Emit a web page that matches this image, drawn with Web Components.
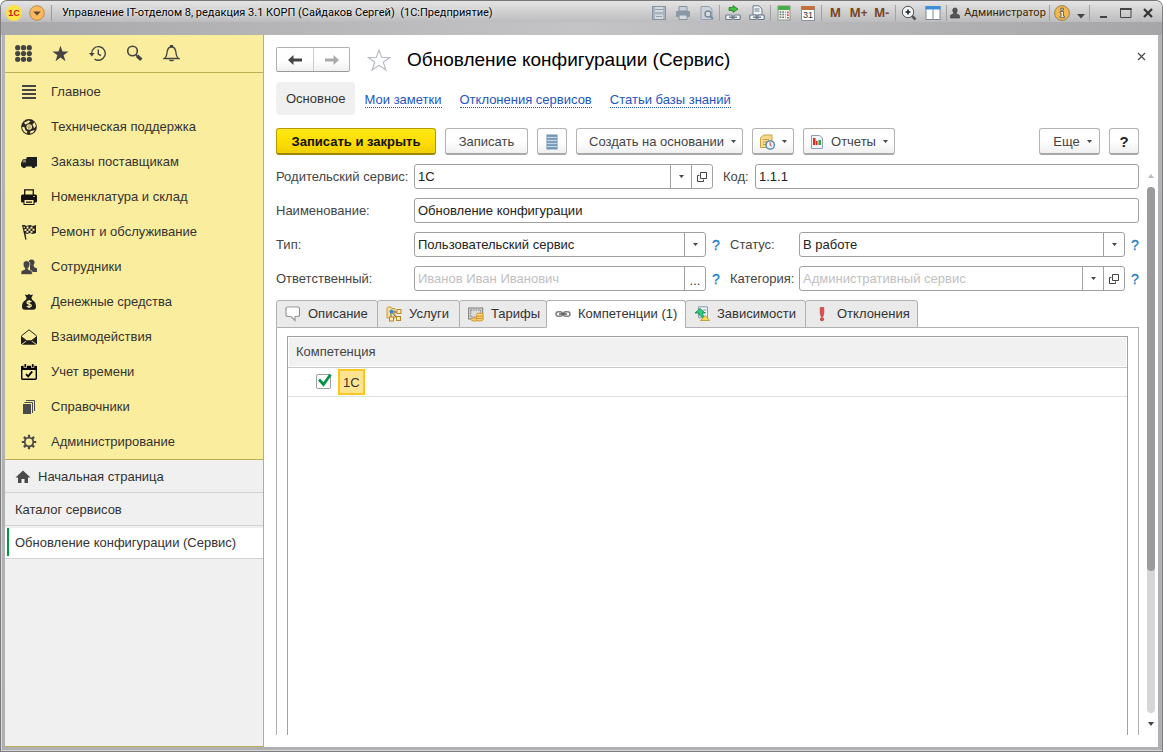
<!DOCTYPE html>
<html lang="ru">
<head>
<meta charset="utf-8">
<title>Управление IT-отделом 8</title>
<style>
  html, body { margin: 0; height: 100%; }
  body { font: 13px/16px "Liberation Sans", Arial, sans-serif; color: #333; background: #fff; }
</style>
</head>
<body>
<app-window>
  <title-bar slot="title" caption="Управление IT-отделом 8, редакция 3.1 КОРП (Сайдаков Сергей)  (1С:Предприятие)" user="Администратор"></title-bar>
  <side-bar slot="side">
    <menu-item icon="lines">Главное</menu-item>
    <menu-item icon="ball">Техническая поддержка</menu-item>
    <menu-item icon="truck">Заказы поставщикам</menu-item>
    <menu-item icon="printer">Номенклатура и склад</menu-item>
    <menu-item icon="flag">Ремонт и обслуживание</menu-item>
    <menu-item icon="people">Сотрудники</menu-item>
    <menu-item icon="money">Денежные средства</menu-item>
    <menu-item icon="mail">Взаимодействия</menu-item>
    <menu-item icon="calendar">Учет времени</menu-item>
    <menu-item icon="books">Справочники</menu-item>
    <menu-item icon="gear">Администрирование</menu-item>
    <open-page slot="pages" icon="home">Начальная страница</open-page>
    <open-page slot="pages">Каталог сервисов</open-page>
    <open-page slot="pages" active>Обновление конфигурации (Сервис)</open-page>
  </side-bar>
  <service-form caption="Обновление конфигурации (Сервис)">
    <nav-links slot="nav" current="Основное" links="Мои заметки|Отклонения сервисов|Статьи базы знаний"></nav-links>
    <cmd-button slot="commands" primary style="--w:160px">Записать и закрыть</cmd-button>
    <cmd-button slot="commands" style="--w:83px">Записать</cmd-button>
    <cmd-button slot="commands" icon="journal" label="Журнал" style="--w:30px"></cmd-button>
    <cmd-button slot="commands" menu style="--w:167px">Создать на основании</cmd-button>
    <cmd-button slot="commands" menu icon="remind" label="Напоминание" style="--w:42px"></cmd-button>
    <cmd-button slot="commands" menu icon="report" style="--w:92px">Отчеты</cmd-button>
    <cmd-button slot="more" menu style="--w:61px">Еще</cmd-button>
    <cmd-button slot="more" help style="--w:30px">?</cmd-button>

    <form-row slot="fields" cols="437px 1fr" gap="10px">
      <form-field label="Родительский сервис:" value="1С" buttons="drop open" style="--label:138px"></form-field>
      <form-field label="Код:" value="1.1.1" style="--label:32px"></form-field>
    </form-row>
    <form-row slot="fields" cols="1fr">
      <form-field label="Наименование:" value="Обновление конфигурации" style="--label:138px"></form-field>
    </form-row>
    <form-row slot="fields" cols="444px 1fr" gap="10px">
      <form-field label="Тип:" kind="select" value="Пользовательский сервис" hint style="--label:138px"></form-field>
      <form-field label="Статус:" kind="select" value="В работе" hint style="--label:69px"></form-field>
    </form-row>
    <form-row slot="fields" cols="444px 1fr" gap="10px">
      <form-field label="Ответственный:" placeholder="Иванов Иван Иванович" buttons="dots" hint style="--label:138px"></form-field>
      <form-field label="Категория:" placeholder="Административный сервис" buttons="drop open" hint style="--label:69px"></form-field>
    </form-row>

    <tab-panel slot="tabs">
      <tab-head slot="heads" icon="bubble" style="--w:101px">Описание</tab-head>
      <tab-head slot="heads" icon="services" style="--w:82px">Услуги</tab-head>
      <tab-head slot="heads" icon="tariff" style="--w:87px">Тарифы</tab-head>
      <tab-head slot="heads" icon="chain" active style="--w:139px">Компетенции (1)</tab-head>
      <tab-head slot="heads" icon="depend" style="--w:120px">Зависимости</tab-head>
      <tab-head slot="heads" icon="alert" style="--w:112px">Отклонения</tab-head>
      <check-list column="Компетенция" item="1С"></check-list>
    </tab-panel>
    <scroll-rail slot="rail"></scroll-rail>
  </service-form>
</app-window>

<script>
const ICONS = {
  grid: [17, 17, '<g fill="#444"><circle cx="2.7" cy="2.7" r="2.6"/><circle cx="8.5" cy="2.7" r="2.6"/><circle cx="14.3" cy="2.7" r="2.6"/><circle cx="2.7" cy="8.5" r="2.6"/><circle cx="8.5" cy="8.5" r="2.6"/><circle cx="14.3" cy="8.5" r="2.6"/><circle cx="2.7" cy="14.3" r="2.6"/><circle cx="8.5" cy="14.3" r="2.6"/><circle cx="14.3" cy="14.3" r="2.6"/></g>'],
  star: [17, 17, '<path fill="#444" d="M8.5.8l2 5.800h6l-4.900 3.600 1.900 6-5-3.700-5 3.700 1.900-6L.5 6.600h6z"/>'],
  history: [17, 17, '<g fill="none" stroke="#444" stroke-width="1.400"><path d="M2.600 8.500a6.800 6.800 0 1 1 3 5.600"/><path d="M9.300 4.500V9l2.700 1.700"/></g><path fill="#444" d="M0 8h5.600l-2.800 3.400z"/>'],
  search: [17, 17, '<circle cx="6.500" cy="6" r="4.800" fill="none" stroke="#444" stroke-width="1.600"/><path d="M10 9.500l1.500 1.500" stroke="#444" stroke-width="1.500"/><path d="M11 10.800l4.300 4" stroke="#444" stroke-width="3.400"/>'],
  bell: [17, 17, '<path fill="none" stroke="#444" stroke-width="1.300" d="M1.200 13.500c2.400-1.400 2.600-3.300 2.900-6.200C4.400 3.800 5.600 2 8.500 2s4.100 1.800 4.400 5.300c.3 2.900.5 4.800 2.900 6.200zM7.600 1.700V.6h1.800v1.100"/><path fill="#444" d="M5.800 14.800h5.400c-.8 2-4.600 2-5.400 0z"/>'],
  lines: [16, 16, '<path fill="#444" d="M1 1h14v2H1zM1 5h14v2H1zM1 9h14v2H1zM1 13h14v2H1z"/>'],
  ball: [16, 16, '<circle cx="8" cy="8" r="7.900" fill="#2a2622"/><g fill="#faec9f"><path d="M3 3.800L7.500 1.500 9.500 2.300 7.300 4.200 4.300 5.500zM11.500 5.200l2.200-2 1.300 4-2 2zM1 8.200l2.200-.4 1.300 3.400 2 1.600-1 1.600C3 13.200 1.500 11 1 8.200zM9 12.500l3.500-1.300 1.200.6c-1.200 1.700-2.700 2.500-4.300 2.900z"/></g><circle cx="8.200" cy="8" r="2.800" fill="#faec9f"/><path d="M7 6.500l2.200-.2 1 1.700-1.100 1.800H7.100L6.200 8z" fill="#b8ad78"/>'],
  truck: [16, 16, '<path fill="#1e1e1e" d="M6 3h10v9.500h-1.600a2 2 0 0 1-3.900 0H5a2 2 0 0 1-3.900 0H0V9l2-3.800h3z"/><path fill="#8d8455" d="M2.500 6H5v2.500H1.300z"/><circle cx="3.100" cy="12.300" r="1.400" fill="#1e1e1e"/><circle cx="12.500" cy="12.300" r="1.400" fill="#1e1e1e"/>'],
  printer: [16, 16, '<path d="M3.700 7V.8h8.600V7" fill="none" stroke="#111" stroke-width="1.300"/><rect y="5.500" width="16" height="8" rx="1.500" fill="#111"/><rect x="3" y="10.500" width="10" height="5" fill="#faec9f" stroke="#111"/><path d="M5 12.500h6v1.300H5z" fill="#111"/><path d="M12 7h2v1h-2z" fill="#b0a565"/>'],
  flag: [16, 16, '<path fill="#222" d="M1 1h3l1 1 4-1 3 1 3-1v8l-3 1-3-1-3 1-1.500-.8L5.500 15.500 4.300 15.800z"/><g fill="#faec9f"><path d="M5.500 2.500l2 .1v1.800l-2 .3zM9.500 2.700l2-.1v2l-2 .2zM7.500 4.700h2v2h-2zM3.500 5h2v2h-2zM11.500 4.700h2v2h-2zM5.500 7l2-.2v1.800l-2 .4zM9.500 7h2v1.800h-2zM2.500 2.500h1l.5 1-1 1z"/></g>'],
  people: [16, 16, '<g fill="#444"><circle cx="10.500" cy="3.400" r="3"/><path d="M9 6h3.500l.5 2 3 1.500V13H9z"/><path d="M5.500 1.800c2.500 0 3.500 1.700 3.300 4-.1 1.600-.9 2.900-1.700 3.400v1.100l3 1.200c1 .4 1.200 1.300 1.200 4.100H-.1c0-2.800.2-3.700 1.200-4.100l2.800-1.200V9.200c-.9-.5-1.600-1.800-1.700-3.400-.2-2.300.8-4 3.300-4z" stroke="#faec9f" stroke-width=".7"/></g>'],
  money: [16, 16, '<path fill="#1e1e1e" d="M3.800.5l2.300.6L8 0l1.800 1.100 2.300-.6-2 3.800h.8v1.200c3 1.800 4.100 4.200 4.100 7 0 2.200-1 3.300-3 3.300H4c-2 0-3-1.100-3-3.300 0-2.800 1.200-5.200 4.200-7V4.300h.6z"/><path fill="none" stroke="#faec9f" stroke-width="1.300" d="M10.300 8c-.8-1-4.300-1.200-4.300.7 0 2 4.300.8 4.300 2.800 0 1.900-3.600 1.800-4.600.6M8.100 6v8"/>'],
  mail: [16, 16, '<path fill="none" stroke="#222" d="M.5 6.800L8 .8l7.500 6v1L10 12H6L.5 7.800z"/><path fill="#1e1e1e" d="M0 7.500l5.300 4L0 15.500zM16 7.500l-5.300 4 5.300 4zM6.300 11.500h3.400l5.300 4.300H1z"/>'],
  calendar: [16, 16, '<rect x=".7" y="2.500" width="14.600" height="12.800" rx="1" fill="none" stroke="#000" stroke-width="1.400"/><path d="M0 2h16v4H0z"/><g fill="#000" stroke="#faec9f" stroke-width=".8"><rect x="3" y="-.3" width="2.600" height="3.600"/><rect x="10.400" y="-.3" width="2.600" height="3.600"/></g><path fill="none" stroke="#000" stroke-width="1.800" d="M5 10.200l2.200 2.200 4-5"/>'],
  books: [16, 16, '<path fill="#4a4a4a" d="M2 5h8v10H2z"/><path fill="none" stroke="#4a4a4a" d="M3.500 3.500h8V14M5 1.500h8.500V12"/>'],
  gear: [16, 16, '<g stroke="#4a4a4a" fill="none"><circle cx="8" cy="8" r="4.300" stroke-width="1.800"/><path stroke-width="2.200" d="M8 .8v2.800M8 12.400v2.800M.8 8h2.800M12.400 8h2.800M2.900 2.900l2 2M11.100 11.100l2 2M13.100 2.900l-2 2M4.900 11.100l-2 2"/></g>'],
  home: [16, 16, '<path fill="#4a4a4a" d="M8 1.500l7.500 7H13V14H9.500v-4h-3v4H3V8.500H.5z"/>'],
  back: [16, 12, '<path fill="#444" d="M1 6l5.500-5v3.600H15v2.800H6.500V11z"/>'],
  fwd: [16, 12, '<path fill="#aaa" d="M15 6L9.500 1v3.600H1v2.800h8.500V11z"/>'],
  fav: [24, 24, '<path fill="#fff" stroke="#b9bdc4" stroke-width="1.200" d="M12 2l2.700 7.500h8L16.300 14.200l2.500 7.800L12 17.300 5.200 22l2.500-7.800L1.300 9.500h8z"/>'],
  close: [9, 9, '<path stroke="#444" stroke-width="1.200" d="M1 1l7 7M8 1L1 8"/>'],
  arrow: [5, 3, '<path fill="#444" d="M0 0h5L2.500 3z"/>'],
  open: [10, 10, '<path fill="none" stroke="#444" stroke-width="1" d="M3.500.5h6v6h-6zM2.500 3.500h-2v6h6v-2"/>'],
  journal: [12, 16, '<rect x="1" y="1" width="10" height="14" fill="#7d9fbd" stroke="#6d90b0"/><path stroke="#c3d6e6" d="M1 3.500h10M1 6.500h10M1 9.500h10M1 12.500h10"/>'],
  remind: [16, 16, '<path fill="#f6d98a" stroke="#c9a24a" d="M4.500 1H13v12.500H1.500V4z"/><path stroke="#c9a24a" d="M4 5.500h6M4 8h4M4 10.500h3"/><circle cx="11.200" cy="11" r="4.200" fill="#e9f1fa" stroke="#4a7fb5" stroke-width="1.300"/><path fill="none" stroke="#c0392b" d="M11.200 8.500V11l1.500 1"/>'],
  report: [14, 16, '<path fill="#f3f7fa" stroke="#8aa0b2" d="M1.500 1.500h8L12.500 4v10.500h-11z"/><path fill="#e0281e" d="M3 4h2.500v7H3zM6 7h1.600v4H6z"/><path fill="#3a9b4b" d="M8.500 6H11v5H8.500z"/>'],
  bubble: [16, 16, '<path fill="#fff" stroke="#999" stroke-width="1.200" d="M3 1h9.500q2 0 2 2v5.500q0 2-2 2H10v4L6 10.500H3q-2 0-2-2V3q0-2 2-2z"/>'],
  services: [16, 16, '<path fill="#f9dd95" stroke="#c79a3c" d="M1 2.500l1-1.500h3l1 1.500h3V12H1z"/><path stroke="#5a6a7a" fill="none" d="M6 6h5M6 6.500l5 5.500M5 7v5"/><g fill="#ffeab0" stroke="#b5852a"><rect x="11" y="3.500" width="4" height="4"/><rect x="10.500" y="10.500" width="4" height="4"/><rect x="3.500" y="11" width="4" height="4"/></g><circle cx="5.500" cy="5.500" r="2" fill="#3b86d0"/>'],
  tariff: [16, 16, '<rect x=".7" y="2" width="14" height="11" fill="#dcdcdc" stroke="#777"/><rect x="2.700" y="4" width="10" height="7" fill="none" stroke="#777" stroke-dasharray="1.500 1"/><g fill="#ffd070" stroke="#c98a20" stroke-width=".8"><ellipse cx="6.500" cy="13.500" rx="3.500" ry="1.600"/><ellipse cx="11.800" cy="13.300" rx="3.600" ry="1.700"/><ellipse cx="11.800" cy="11" rx="3.600" ry="1.700"/><ellipse cx="11.800" cy="8.700" rx="3.600" ry="1.700"/></g>'],
  chain: [16, 16, '<g fill="none" stroke="#808080" stroke-width="1.500"><rect x="1" y="5.700" width="6.500" height="4.600" rx="2.300"/><rect x="8.500" y="5.700" width="6.500" height="4.600" rx="2.300"/></g><path stroke="#555" stroke-width="1.400" d="M4 8h8"/>'],
  depend: [16, 16, '<path fill="#edf2f7" stroke="#8a9db0" d="M4.500.8h9v11h-9z"/><path stroke="#8a9db0" d="M9 4h3M9 6.500h3"/><path fill="#2fd07c" stroke="#178a50" stroke-width=".9" d="M6 2.500l5 4.500H8.500c.2 2 1 3.200 3 4.200-4 .3-6.300-1-6.500-4.200H1z"/><path fill="#ffdc4a" stroke="#b8922a" stroke-width=".8" d="M11.200 9.500l4.300 5H6.500z"/>'],
  alert: [16, 16, '<path fill="#e0504c" stroke="#a83632" stroke-width=".6" d="M6.200 1.500h3.600V7L9 10.500H7L6.200 7z"/><circle cx="8" cy="13.200" r="1.700" fill="#e0504c" stroke="#a83632" stroke-width=".6"/>'],
  save: [16, 16, '<rect x="1.500" y="1.500" width="13" height="13" fill="#a9b4bf" stroke="#8594a3"/><path fill="#d5dae0" d="M4 2h8v5H4zM4 9.500h8V14H4z"/><path stroke="#93a1ae" d="M4 4.500h8M5 11.500h6"/>'],
  print: [16, 16, '<path fill="#c9cfd6" stroke="#8594a3" d="M4 1.500h8V6H4z"/><rect x="1" y="6" width="14" height="6" rx="1" fill="#8a98a6"/><path fill="#d7dbe0" stroke="#8594a3" d="M4 10h8v4.500H4z"/>'],
  preview: [16, 16, '<path fill="#ccd2d9" stroke="#93a1ae" d="M2 1.500h8L13 4v10.500H2z"/><circle cx="9" cy="9" r="3" fill="#d9dee4" stroke="#7c8b9a" stroke-width="1.500"/><path stroke="#7c8b9a" stroke-width="2" d="M11.200 11.200L14 14"/>'],
  link: [16, 16, '<path fill="#3fc23f" stroke="#1d7f1d" stroke-width=".8" d="M4 2.500h4V.5l5 3.500-5 3.500v-2H4z"/><g fill="#f2f5f8" stroke="#6b7a8a" stroke-width="1.200"><rect x=".8" y="10" width="6.400" height="4.500" rx="1"/><rect x="8.800" y="10" width="6.400" height="4.500" rx="1"/></g><path stroke="#6b7a8a" stroke-width="1.400" d="M4 12.200h8"/>'],
  linkdoc: [16, 16, '<path fill="#f2f5f8" stroke="#6b7a8a" d="M4 .8h6L13 4v6H4zM5.500 4h5M5.500 6h5"/><g fill="#f2f5f8" stroke="#6b7a8a" stroke-width="1.200"><rect x=".8" y="10" width="6.400" height="4.500" rx="1"/><rect x="8.800" y="10" width="6.400" height="4.500" rx="1"/></g><path stroke="#6b7a8a" stroke-width="1.400" d="M4 12.200h8"/>'],
  calc: [14, 16, '<rect x="1" y="1" width="12" height="14" fill="#eef1ee" stroke="#8a968a"/><path fill="#45b04b" d="M1 1h12v4H1z"/><path stroke="#6c7a6c" stroke-width="1.500" stroke-dasharray="1.700 1" d="M2.600 7h6M2.600 9.500h6M2.600 12.300h6"/><path stroke="#d44" stroke-width="1.600" stroke-dasharray="1.700 1" d="M10.800 6.500v7"/>'],
  zoomin: [16, 16, '<circle cx="7" cy="7" r="5.700" fill="#f4f7fa" stroke="#555"/><path stroke="#222" stroke-width="1.600" d="M4.500 7h5M7 4.500v5"/><path stroke="#555" stroke-width="2.600" d="M11 11l3.500 3.500"/>'],
  panes: [16, 16, '<rect x="1" y="1.500" width="14" height="13" fill="#fff" stroke="#7d8894"/><path fill="#3f8fd8" d="M.5 1h15v3.500H.5z"/><path stroke="#7d8894" d="M8 4.500v10"/>'],
  user: [10, 12, '<path fill="#555" stroke="#333" stroke-width=".6" d="M5 1c1.700 0 2.400 1.100 2.200 2.700-.1 1.100-.5 1.800-1 2.300v.9l2.500.9c.7.300.8.900.8 3.200H.5c0-2.300.1-2.900.8-3.200l2.500-.9V6c-.5-.5-.9-1.200-1-2.300C2.600 2.100 3.300 1 5 1z"/>'],
  info: [16, 16, '<circle cx="8" cy="8" r="7.400" fill="#f4b94e" stroke="#9a8050"/><path fill="#e9e2d0" stroke="#555" stroke-width=".8" d="M6.800 3.200h2.600v2H6.800zM6 6.500h3.500v4.700h1v1.500H6v-1.500h1V8H6z"/>'],
  tri: [8, 6, '<path fill="#444" d="M0 1h8L4 5.500z"/>'],
  wmin: [12, 12, '<path fill="#444" d="M2 9h7v2H2z"/>'],
  wmax: [12, 12, '<path fill="none" stroke="#444" d="M.5 1.500h10.500v9H.5z"/><path fill="#444" d="M0 1h11.500v2H0z"/>'],
  wclose: [12, 12, '<path stroke="#333" stroke-width="2.200" d="M2 2l8 8M10 2l-8 8"/>'],
  round: [16, 16, '<circle cx="8" cy="8" r="7.300" fill="#f9b95c" stroke="#b98a4e"/><path fill="#5a4a35" d="M4.200 6.500h7.600L8 10.500z"/>'],
  tick: [15, 15, '<path fill="none" stroke="#009646" stroke-width="2.800" d="M3 5.500l4.500 5L14.500.5"/>'],
  up: [8, 5, '<path fill="#bbb" d="M1 5h6L4 1z"/>'],
  down: [8, 5, '<path fill="#444" d="M1 0h6L4 4z"/>']
};
const svg = n => { const [w, h, b] = ICONS[n]; return `<svg width="${w}" height="${h}" viewBox="0 0 ${w} ${h}" aria-hidden="true">${b}</svg>`; };

class Base extends HTMLElement {
  connectedCallback() {
    if (this.shadowRoot) return;
    this.attachShadow({ mode: 'open' }).innerHTML =
      `<style>*{box-sizing:border-box}svg{display:block;flex:none}button,input,select{font:inherit;color:inherit;margin:0}button{padding:0;border:0;background:none}${this.css()}</style>${this.html()}`;
  }
  at(n) { return this.getAttribute(n) || ''; }
}

customElements.define('app-window', class extends Base {
  css() { return `
    :host{display:flex;flex-direction:column;box-sizing:border-box;min-height:100vh;border:1px solid #7d7d7f;border-top-color:#77777a;border-radius:7px 7px 0 0;
      background:linear-gradient(#b4b4b6,#b0b0b2);padding:0 4px 4px;box-shadow:inset 1px -1px #d6d6d6}
    .body{flex:1;display:flex;min-height:0;background:#fff}
    ::slotted(side-bar){flex:none;width:259px}
    ::slotted(service-form){flex:1;min-width:0}`; }
  html() { return `<slot name="title"></slot><div class="body"><slot name="side"></slot><slot></slot></div>`; }
});

customElements.define('title-bar', class extends Base {
  css() { return `
    :host{display:block;margin:0 -4px;height:34px;border-radius:6px 6px 0 0;font:11px/22px Roboto,sans-serif;color:#222;
      background:linear-gradient(#e4e4e4,#bcbcbe 21px,transparent 21px),linear-gradient(90deg,#a8a8ab,#c4c4c6 50%,#a6a6a9)}
    header{display:flex;height:24px;align-items:center;padding-left:5px}
    .left{display:flex;gap:7px;align-items:center;padding-right:6px;height:16px;border-right:1px solid #999}
    .logo{width:16px;height:16px;border-radius:50%;background:radial-gradient(#ffee58,#ffd83a);font:bold 9px/16px "Liberation Sans",sans-serif;color:#d8141c;text-align:center}
    .cap{flex:1;min-width:0;padding-left:10px;white-space:pre;overflow:hidden;color:#000;text-shadow:0 0 3px #fff}
    .g{display:flex;align-items:center;justify-content:center;height:16px;border-left:1px solid #a2a2a4}
    .g.first{border:0}
    .g button{width:24px;height:22px;display:flex;align-items:center;justify-content:center}
    .m button{width:23px;font:bold 12px/22px "Open Sans",sans-serif;color:#7c4321}
    .g .user{width:auto;gap:4px;color:#3c2800}
    .w button{width:22px}
    .cal{width:14px;height:15px;border:1px solid #8a8f99;border-top:4px solid #c2703c;background:#fff;font:9px/10px "Liberation Sans",sans-serif;color:#333}`; }
  html() {
    const b = (n, l) => `<button title="${l}" aria-label="${l}">${svg(n)}</button>`;
    return `<header><div class="left"><span class="logo">1С</span><button aria-label="Главное меню">${svg('round')}</button></div>
    <div class="cap">${this.at('caption')}</div>
    <div class="g first" style="width:72px">${b('save', 'Сохранить')}${b('print', 'Печать')}${b('preview', 'Просмотр')}</div>
    <div class="g" style="width:51px">${b('link', 'Перейти по ссылке')}${b('linkdoc', 'Получить ссылку')}</div>
    <div class="g" style="width:51px">${b('calc', 'Калькулятор')}<button aria-label="Календарь"><span class="cal">31</span></button></div>
    <div class="g m" style="width:74px"><button>M</button><button>M+</button><button>M-</button></div>
    <div class="g" style="width:51px">${b('zoomin', 'Масштаб')}${b('panes', 'Панели')}</div>
    <div class="g" style="width:103px"><button class="user">${svg('user')}${this.at('user')}</button></div>
    <div class="g w" style="width:40px">${b('info', 'Справка')}<button aria-label="Ещё" style="width:16px;padding-top:5px">${svg('tri')}</button></div>
    <div class="g w" style="width:73px">${b('wmin', 'Свернуть')}${b('wmax', 'Развернуть')}${b('wclose', 'Закрыть')}</div></header>`;
  }
});

customElements.define('side-bar', class extends Base {
  css() { return `
    :host{display:flex;flex-direction:column;box-sizing:border-box;background:#f0f0f0;border-right:1px solid #bfb25f;border-bottom:1px solid #bfae55}
    .tools{display:flex;height:38px;background:#fbed9e;border-bottom:1px solid #bfae55}
    .tools button{width:37px;display:flex;align-items:center;justify-content:center}
    nav.main{background:#fbed9e;padding:1px 0 0;border-bottom:1px solid #bfae55}`; }
  html() { return `<div class="tools">${[['grid', 'Меню'], ['star', 'Избранное'], ['history', 'История'], ['search', 'Поиск'], ['bell', 'Оповещения']].map(([n, l]) => `<button aria-label="${l}">${svg(n)}</button>`).join('')}</div>
    <nav class="main"><slot></slot></nav><nav><slot name="pages"></slot></nav>`; }
});

customElements.define('menu-item', class extends Base {
  css() { return `:host{display:block}a{display:flex;align-items:center;gap:14px;height:35px;padding-left:16px;color:#333;text-decoration:none;white-space:nowrap}`; }
  html() { return `<a href="#">${svg(this.at('icon'))}<slot></slot></a>`; }
});

customElements.define('open-page', class extends Base {
  css() { return `:host{display:block;border-bottom:1px solid #d2d2d2}:host([active]){background:#fff}
    a{display:flex;align-items:center;gap:7px;height:32px;padding:2px 0 0 10px;color:#333;text-decoration:none;white-space:nowrap}
    :host([active]) a{padding:2px 0 0 6px;height:28px;margin:2px;border-left:2px solid #009646}`; }
  html() { return `<a href="#">${this.at('icon') ? svg(this.at('icon')) : ''}<slot></slot></a>`; }
});

customElements.define('service-form', class extends Base {
  css() { return `
    :host{display:flex;flex-direction:column;box-sizing:border-box;padding:12px 3px 12px 12px}
    .head{display:flex;align-items:center;height:25px}
    .hist{display:flex;height:25px;border:1px solid #b0b0b0;border-bottom-color:#999;border-radius:2px;background:linear-gradient(#fff 50%,#f0f0f0)}
    .hist button{width:36px;display:flex;align-items:center;justify-content:center}
    .hist button+button{border-left:1px solid #ccc}
    .fav{margin:0 16px 0 17px}
    h1{flex:1;margin:0;font:19px/24px "Liberation Sans",Arial,sans-serif;color:#000;white-space:nowrap}
    .x{padding:4px 9px;margin-bottom:6px}
    .bar{display:flex;gap:9px;margin:13px 16px 9px 0}
    .sp{flex:1}
    .work{flex:1;display:flex;min-height:0}
    .form{flex:1;min-width:0;display:flex;flex-direction:column;gap:9px}
    ::slotted(tab-panel){flex:1}
    ::slotted(scroll-rail){flex:none;width:16px}`; }
  html() { return `<div class="head"><div class="hist"><button aria-label="Назад">${svg('back')}</button><button aria-label="Вперед">${svg('fwd')}</button></div>
    <button class="fav" aria-label="В избранное">${svg('fav')}</button><h1>${this.at('caption')}</h1><button class="x" aria-label="Закрыть">${svg('close')}</button></div>
    <slot name="nav"></slot>
    <div class="bar"><slot name="commands"></slot><span class="sp"></span><slot name="more"></slot></div>
    <div class="work"><div class="form"><slot name="fields"></slot><slot name="tabs"></slot></div><slot name="rail"></slot></div>`; }
});

customElements.define('nav-links', class extends Base {
  css() { return `:host{display:flex;align-items:center;gap:18px;margin-top:10px;height:33px}
    span{padding:0 9px 0 10px;height:33px;line-height:34px;background:#f0f0f0;border-radius:4px;margin-right:-8px}
    a{color:#2255c0;text-decoration:none;border-bottom:1px dotted #2255c0;line-height:15px;padding-top:2px;white-space:nowrap}`; }
  html() { return `<span aria-current="page">${this.at('current')}</span>${this.at('links').split('|').map(t => `<a href="#">${t}</a>`).join('')}`; }
});

customElements.define('cmd-button', class extends Base {
  css() { return `:host{display:block;width:var(--w)}
    button{width:100%;height:27px;display:flex;align-items:center;justify-content:center;gap:7px;border:1px solid #b3b3b3;border-bottom:2px solid #a8a8a8;border-radius:3px;
      background:linear-gradient(#fff 50%,#f0f0f0);color:#444;white-space:nowrap;padding-top:1px}
    :host([menu]) button{padding-left:6px}
    :host([menu][icon]) button{padding-left:0}
    :host([primary]) button{background:linear-gradient(#ffe81a,#ffdf00 50%,#efcf00);border-color:#b79a00;border-bottom-color:#a08700;color:#111;font-weight:bold}
    :host([help]) button{font:bold 15px/16px "Liberation Sans",sans-serif;color:#222}`; }
  html() { return `<button${this.at('label') ? ` aria-label="${this.at('label')}"` : ''}>${this.at('icon') ? svg(this.at('icon')) : ''}${this.textContent ? '<span><slot></slot></span>' : ''}${this.hasAttribute('menu') ? svg('arrow') : ''}</button>`; }
});

customElements.define('form-row', class extends Base {
  css() { return `:host{display:grid;grid-template-columns:${this.at('cols')};column-gap:${this.at('gap') || 0}}`; }
  html() { return `<slot></slot>`; }
});

customElements.define('form-field', class extends Base {
  css() { return `:host{display:flex;align-items:center;height:25px;min-width:0}
    label{flex:none;width:var(--label);color:#444;white-space:nowrap}
    .box{flex:1;min-width:0;display:flex;height:25px;border:1px solid #a0a0a0;border-radius:3px;background:#fff;overflow:hidden}
    input,select{flex:1;min-width:0;width:100%;border:0;padding:0 3px;background:none;appearance:none;color:#222;outline:0}
    input::placeholder{color:#c0c0c0;opacity:1}
    .box button,.pick{flex:none;width:21px;border-left:1px solid #a0a0a0;display:flex;align-items:center;justify-content:center}
    .sel{flex:1;display:grid;grid-template-columns:1fr 21px}
    .sel select{grid-area:1/1/2/3}
    .sel .pick{grid-area:1/2;pointer-events:none}
    .dots{padding-top:4px;line-height:12px}
    .hint{flex:none;width:14px;padding-left:6px;color:#1a7fc4;font-size:14px;text-align:left;-webkit-text-stroke:.3px}`; }
  html() {
    const btn = { drop: `<button aria-label="Выбрать">${svg('arrow')}</button>`, open: `<button aria-label="Открыть">${svg('open')}</button>`, dots: '<button class="dots" aria-label="Подобрать">...</button>' };
    const inner = this.at('kind') === 'select'
      ? `<div class="sel"><select id="f"><option>${this.at('value')}</option></select><span class="pick">${svg('arrow')}</span></div>`
      : `<input id="f" type="text" value="${this.at('value')}" placeholder="${this.at('placeholder')}">${this.at('buttons').split(' ').filter(Boolean).map(k => btn[k]).join('')}`;
    return `<label for="f">${this.at('label')}</label><div class="box">${inner}</div>${this.hasAttribute('hint') ? '<button class="hint" aria-label="Подсказка">?</button>' : ''}`;
  }
});

customElements.define('tab-panel', class extends Base {
  css() { return `:host{display:flex;flex-direction:column}
    .heads{display:flex;padding-right:1px}
    .pane{flex:1;display:flex;border:1px solid #b0b0b0;border-bottom:0;margin-top:-1px;padding:8px 10px 0}
    ::slotted(check-list){flex:1}`; }
  html() { return `<div class="heads" role="tablist"><slot name="heads"></slot></div><div class="pane" role="tabpanel"><slot></slot></div>`; }
});

customElements.define('tab-head', class extends Base {
  css() { return `:host{display:block;width:var(--w);position:relative}
    button{width:calc(100% + 1px);height:28px;display:flex;align-items:center;gap:7px;padding-left:8px;border:1px solid #b0b0b0;border-radius:3px 3px 0 0;background:#eaeaea;color:#333;white-space:nowrap}
    :host([active]) button{background:#fff;border-bottom-color:#fff}`; }
  html() { return `<button role="tab" aria-selected="${this.hasAttribute('active')}">${svg(this.at('icon'))}<slot></slot></button>`; }
});

customElements.define('check-list', class extends Base {
  css() { return `:host{display:block;border:1px solid #a0a0a0;border-bottom:0}
    table{width:100%;border-collapse:collapse}
    th{height:30px;padding:0 8px;text-align:left;font-weight:normal;color:#444;background:#f1f1f1;border-bottom:1px solid #c8c8c8;box-shadow:inset 0 0 0 1px #fff}
    td{height:29px;padding:0 0 0 28px;border-bottom:1px solid #e0e0e0}
    label{display:flex;align-items:center;gap:7px}
    .c{display:grid;width:15px;height:15px}
    .c input{grid-area:1/1;appearance:none;width:15px;height:15px;margin:0;border:1px solid #a0a0a0;border-radius:2px}
    .c svg{grid-area:1/1;pointer-events:none;visibility:hidden;overflow:visible}
    .c input:checked+svg{visibility:visible}
    .v{height:26px;line-height:23px;padding:0 3px;border:2px solid #fcc621;background:#ffe48f;white-space:nowrap}`; }
  html() { return `<table><thead><tr><th scope="col">${this.at('column')}</th></tr></thead><tbody><tr><td><label><span class="c"><input type="checkbox" checked>${svg('tick')}</span><span class="v">${this.at('item')}</span></label></td></tr></tbody></table>`; }
});

customElements.define('scroll-rail', class extends Base {
  css() { return `:host{display:flex;flex-direction:column;align-items:center;gap:9px;padding:9px 0 8px 8px;box-sizing:border-box}
    .track{flex:1;width:8px;border-radius:4px;background:#d6d6d6}
    .thumb{height:73%;border-radius:4px;background:#9b9b9b}`; }
  html() { return `${svg('up')}<div class="track"><div class="thumb"></div></div>${svg('down')}`; }
});
</script>
</body>
</html>
